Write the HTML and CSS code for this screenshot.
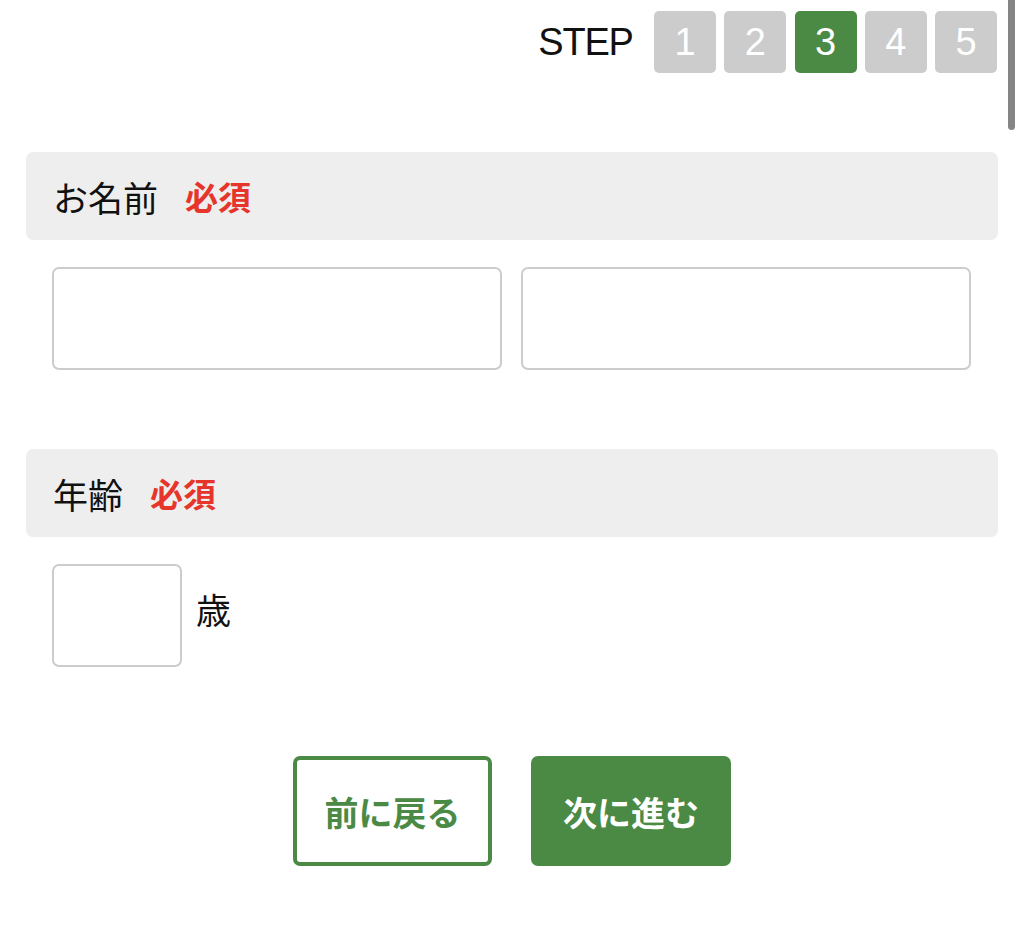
FILE: index.html
```html
<!DOCTYPE html>
<html lang="ja">
<head>
<meta charset="utf-8">
<title>STEP 3</title>
<link rel="stylesheet" href="styles.css">
</head>
<body>
<div class="page">
  <div class="steps">
    <span class="steps-label">STEP</span>
    <span class="step">1</span>
    <span class="step">2</span>
    <span class="step step-current">3</span>
    <span class="step">4</span>
    <span class="step">5</span>
  </div>

  <section class="field field-name">
    <div class="field-head"><span class="field-title">お名前</span><span class="required">必須</span></div>
    <div class="field-body name-row">
      <input class="text-input" type="text">
      <input class="text-input" type="text">
    </div>
  </section>

  <section class="field field-age">
    <div class="field-head"><span class="field-title">年齢</span><span class="required">必須</span></div>
    <div class="field-body age-row">
      <input class="text-input age-input" type="text">
      <span class="unit">歳</span>
    </div>
  </section>

  <div class="actions">
    <button class="btn btn-back" type="button">前に戻る</button>
    <button class="btn btn-next" type="button">次に進む</button>
  </div>
</div>
<div class="scroll-thumb"></div>
</body>
</html>
```

FILE: styles.css
```css
html, body {
  margin: 0;
  padding: 0;
  background: #ffffff;
}
body {
  font-family: "Noto Sans CJK JP", "Noto Sans", sans-serif;
  color: #111111;
  overflow: hidden;
}
.page {
  padding: 11px 26px 0 26px;
}
.steps {
  display: flex;
  justify-content: flex-end;
  align-items: center;
  gap: 8.25px;
  padding-right: 1px;
}
.steps-label {
  font-family: "Liberation Sans", Arial, sans-serif;
  font-size: 38px;
  letter-spacing: -1.2px;
  color: #111111;
  margin-right: 13px;
  line-height: 1;
}
.step {
  width: 62px;
  height: 62px;
  border-radius: 5px;
  background: #cccccc;
  color: #ffffff;
  font-family: "Liberation Sans", Arial, sans-serif;
  font-size: 38px;
  display: flex;
  align-items: center;
  justify-content: center;
  line-height: 1;
}
.step-current {
  background: #4a8a45;
}
.field-name {
  margin-top: 79px;
}
.field-age {
  margin-top: 79px;
}
.field-head {
  height: 88px;
  background: #eeeeee;
  border-radius: 7px;
  display: flex;
  align-items: center;
  padding-left: 27px;
}
.field-title {
  font-size: 35px;
  line-height: 1;
}
.required {
  font-size: 33px;
  font-weight: 700;
  color: #e6352b;
  margin-left: 27px;
  line-height: 1;
}
.field-body {
  padding: 27px 27px 0 26px;
}
.name-row {
  display: flex;
  gap: 19px;
}
.text-input {
  box-sizing: border-box;
  height: 103px;
  flex: 1;
  min-width: 0;
  border: 2px solid #cccccc;
  border-radius: 7px;
  background: #ffffff;
  margin: 0;
  padding: 0 12px;
  font-size: 32px;
  outline: none;
}
.age-row {
  display: flex;
  align-items: center;
  gap: 14px;
}
.age-input {
  flex: 0 0 130px;
  width: 130px;
}
.unit {
  font-size: 35px;
  line-height: 1;
  margin-bottom: 14px;
}
.actions {
  display: flex;
  justify-content: center;
  gap: 39px;
  margin-top: 89px;
}
.btn {
  box-sizing: border-box;
  width: 200px;
  height: 110px;
  border-radius: 7px;
  font-family: "Noto Sans CJK JP", sans-serif;
  font-size: 34px;
  font-weight: 700;
  display: flex;
  align-items: center;
  justify-content: center;
  padding: 0;
  cursor: pointer;
}
.btn-back {
  width: 199px;
  background: #ffffff;
  color: #4a8a45;
  border: 4px solid #4a8a45;
}
.btn-next {
  background: #4a8a45;
  color: #ffffff;
  border: none;
}
.scroll-thumb {
  position: fixed;
  top: -6px;
  right: 9px;
  width: 7px;
  height: 136px;
  border-radius: 4px;
  background: #858585;
}
```
